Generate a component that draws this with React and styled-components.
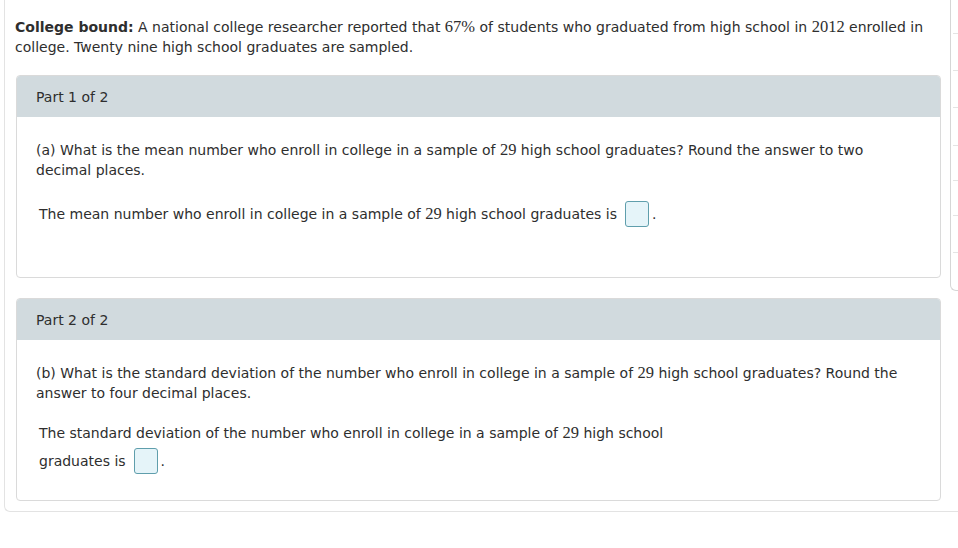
import React from "react";
import styled, { createGlobalStyle } from "styled-components";

const Global = createGlobalStyle`
  html, body { margin: 0; padding: 0; background: #fff; }
  body {
    font-family: Verdana, "DejaVu Sans", sans-serif;
    font-size: 14px;
    color: #2e2e2e;
    overflow: hidden;
  }
`;

const Page = styled.div`
  width: 958px;
  height: 548px;
  overflow: hidden;
`;

const Frame = styled.div`
  margin-left: 4px;
  width: 1000px;
  display: flex;
  align-items: flex-start;
  border-left: 1px solid #e3e3e3;
  border-bottom: 1px solid #e3e3e3;
  border-bottom-left-radius: 6px;
`;

const Content = styled.div`
  width: 926px;
  padding: 17px 0 10px 10px;
  flex-shrink: 0;
`;

const Intro = styled.p`
  margin: 0 0 18px 0;
  line-height: 20px;
`;

const Num = styled.span`
  font-family: "Liberation Serif", "Times New Roman", serif;
  font-size: 16.5px;
`;

const Card = styled.section`
  margin-left: 1px;
  border: 1px solid #dadada;
  border-radius: 4px;
  overflow: hidden;
  & + & {
    margin-top: 20px;
  }
`;

const CardHeader = styled.div`
  height: 41px;
  display: flex;
  align-items: center;
  padding: 0 19px;
  background: #d1dade;
`;

const CardBody = styled.div`
  height: 160px;
  box-sizing: border-box;
  padding: 23px 19px 0 19px;
`;

const Question = styled.p`
  margin: 0;
  line-height: 20px;
`;

const Answer = styled.p`
  margin: ${(p) => p.$top}px 0 0 3px;
  max-width: 640px;
  line-height: 28px;
`;

const Box = styled.span`
  display: inline-block;
  vertical-align: middle;
  width: 22px;
  height: 24px;
  margin: -2px 3px 0 8px;
  border: 1px solid #5f9eac;
  border-radius: 3px;
  background: #e5f4f9;
`;

const Side = styled.div`
  margin-left: 9px;
  width: 60px;
  height: 290px;
  border-left: 1px solid #d6d6d6;
  border-bottom: 1px solid #d6d6d6;
  border-bottom-left-radius: 6px;
  display: flex;
  flex-direction: column;
  padding-left: 2px;
`;

const SideRow = styled.div`
  height: ${(p) => p.$h}px;
  flex-shrink: 0;
  border-bottom: ${(p) => (p.$last ? "none" : "1px solid #e4e4e4")};
`;

const rows = [33, 36, 36, 37, 34, 34, 36, 37];

export default function App() {
  return (
    <Page>
      <Global />
      <Frame>
        <Content>
          <Intro>
            <b>College bound:</b> A national college researcher reported that{" "}
            <Num>67%</Num> of students who graduated from high school in{" "}
            <Num>2012</Num> enrolled in college. Twenty nine high school
            graduates are sampled.
          </Intro>
          <Card>
            <CardHeader>Part 1 of 2</CardHeader>
            <CardBody>
              <Question>
                (a) What is the mean number who enroll in college in a sample of{" "}
                <Num>29</Num> high school graduates? Round the answer to two
                decimal places.
              </Question>
              <Answer $top={20}>
                The mean number who enroll in college in a sample of{" "}
                <Num>29</Num> high school graduates is
                <Box />.
              </Answer>
            </CardBody>
          </Card>
          <Card>
            <CardHeader>Part 2 of 2</CardHeader>
            <CardBody>
              <Question>
                (b) What is the standard deviation of the number who enroll in
                college in a sample of <Num>29</Num> high school graduates?
                Round the answer to four decimal places.
              </Question>
              <Answer $top={16}>
                The standard deviation of the number who enroll in college in a
                sample of <Num>29</Num> high school graduates is
                <Box />.
              </Answer>
            </CardBody>
          </Card>
        </Content>
        <Side>
          {rows.map((h, i) => (
            <SideRow key={i} $h={h} $last={i === rows.length - 1} />
          ))}
        </Side>
      </Frame>
    </Page>
  );
}
